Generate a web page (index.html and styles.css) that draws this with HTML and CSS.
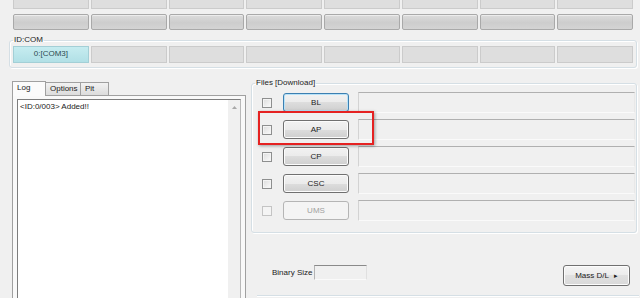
FILE: index.html
```html
<!DOCTYPE html>
<html lang="en">
<head>
    <meta charset="UTF-8">
    <title>Odin</title>
<link rel="stylesheet" href="styles.css">
</head>
<body>
    <div class="strip strip-top">
        <div class="cell"></div><div class="cell"></div><div class="cell"></div><div class="cell"></div>
        <div class="cell"></div><div class="cell"></div><div class="cell"></div><div class="cell"></div>
    </div>
    <div class="strip strip-bars">
        <div class="bar"></div><div class="bar"></div><div class="bar"></div><div class="bar"></div>
        <div class="bar"></div><div class="bar"></div><div class="bar"></div><div class="bar"></div>
    </div>
    <fieldset class="group com-group">
        <legend>ID:COM</legend>
        <div class="strip strip-com">
            <div class="cell port">0:[COM3]</div><div class="cell"></div><div class="cell"></div><div class="cell"></div>
            <div class="cell"></div><div class="cell"></div><div class="cell"></div><div class="cell"></div>
        </div>
    </fieldset>

    <div class="lower">
        <div class="log-side">
            <div class="tabs">
                <span class="tab selected">Log</span>
                <span class="tab">Options</span>
                <span class="tab">Pit</span>
            </div>
            <div class="tab-page">
                <div class="log-box">
                    <div class="log-text">&lt;ID:0/003&gt; Added!!</div>
                    <div class="scroll">
                        <svg width="5" height="3" viewBox="0 0 5 3"><path d="M0 3 L2.5 0 L5 3 Z" fill="#a8a8a8"/></svg>
                    </div>
                </div>
            </div>
        </div>

        <div class="files-side">
            <fieldset class="group files-group">
                <legend>Files [Download]</legend>
                <div class="file-row">
                    <span class="check"></span>
                    <button class="btn file-btn focused">BL</button>
                    <div class="path"></div>
                </div>
                <div class="file-row">
                    <span class="check"></span>
                    <button class="btn file-btn">AP</button>
                    <div class="path"></div>
                </div>
                <div class="file-row">
                    <span class="check"></span>
                    <button class="btn file-btn">CP</button>
                    <div class="path"></div>
                </div>
                <div class="file-row">
                    <span class="check"></span>
                    <button class="btn file-btn">CSC</button>
                    <div class="path"></div>
                </div>
                <div class="file-row">
                    <span class="check disabled"></span>
                    <button class="btn file-btn disabled">UMS</button>
                    <div class="path"></div>
                </div>
            </fieldset>
            <div class="actions">
                <span class="size-label">Binary Size</span>
                <div class="size-box"></div>
                <button class="btn mass">Mass D/L <span class="arrow">&#9656;</span></button>
            </div>
            <div class="bottom-line"></div>
        </div>
    </div>

    <div class="highlight"></div>
</body>
</html>
```

FILE: styles.css
```css
body {
    margin: 0;
    padding: 0;
    width: 640px;
    height: 298px;
    overflow: hidden;
    position: relative;
    background: #f0f0f0;
    font-family: 'Liberation Sans', Arial, sans-serif;
    font-size: 8px;
    color: #222;
}

.strip {
    display: grid;
    grid-template-columns: repeat(8, 1fr);
    column-gap: 2px;
    width: 620px;
}

.strip-top {
    margin-left: 13px;
    height: 9px;
}

.strip-top .cell {
    border-top: none;
}

.strip-bars {
    margin-left: 13px;
    margin-top: 5px;
    height: 16px;
}

.cell {
    background: #dedede;
    border: 1px solid #cbcbcb;
    box-sizing: border-box;
    text-align: center;
    line-height: 14px;
}

.bar {
    box-sizing: border-box;
    border: 1px solid #a9a9a9;
    border-radius: 2px;
    background: linear-gradient(#dcdcdc, #cdcdcd 55%, #d4d4d4);
    box-shadow: inset 0 1px 0 #ececec;
}

.group {
    border: 1px solid #d5dfe5;
    border-radius: 3px;
    box-shadow: inset 1px 1px 0 #fff, 1px 1px 0 #fff;
}

.group legend {
    padding: 0 1px;
    line-height: 10px;
    color: #222;
}

.com-group {
    margin: 5px 4px 0 9px;
    padding: 1px 3px 4px 3px;
}

.strip-com {
    height: 17px;
}

.cell.port {
    background: linear-gradient(#c6ecf0, #b1e0e6);
    border-color: #a3cfd6;
    color: #2c4a50;
}

.lower {
    display: flex;
    align-items: flex-start;
    margin-top: 10px;
}

.log-side {
    width: 234px;
    margin-left: 12px;
    margin-top: 3px;
}

.tabs {
    display: flex;
    align-items: flex-end;
    height: 14px;
    padding-left: 1px;
}

.tab {
    box-sizing: border-box;
    height: 13px;
    line-height: 12px;
    padding: 0 4px;
    border: 1px solid #a0a0a0;
    border-bottom: none;
    background: linear-gradient(#f2f2f2, #dcdcdc);
    margin-left: -1px;
}

.tab.selected {
    height: 15px;
    width: 34px;
    margin-bottom: -1px;
    background: #fbfbfb;
    line-height: 11px;
    position: relative;
    z-index: 1;
}

.tab:nth-child(2) {
    width: 36px;
}

.tab:nth-child(3) {
    width: 29px;
}

.tab-page {
    border: 1px solid #a0a0a0;
    border-bottom: none;
    background: #f9f9f9;
    padding: 3px 4px 0 4px;
    height: 210px;
}

.log-box {
    display: flex;
    height: 210px;
    background: #fff;
    border: 1px solid #7d7d7d;
    border-right-color: #b8b8b8;
    border-bottom: none;
}

.log-text {
    flex: 1;
    padding: 2px 2px;
    line-height: 10px;
    color: #222;
}

.scroll {
    width: 12px;
    background: #f0f0f0;
    display: flex;
    justify-content: center;
    padding-top: 6px;
    box-sizing: border-box;
}

.scroll svg {
    display: block;
}

.files-side {
    margin-left: 5px;
    width: 388px;
}

.files-group {
    margin: 0 2px 0 0;
    padding: 4px 1px 11px 10px;
    display: flex;
    flex-direction: column;
    row-gap: 6px;
}

.files-group legend {
    margin-left: -7px;
}

.file-row {
    display: flex;
    align-items: center;
    height: 21px;
}

.check {
    box-sizing: border-box;
    width: 10px;
    height: 10px;
    border: 1px solid #8e8f8f;
    background: linear-gradient(135deg, #dcdcdc, #fbfbfb);
    box-shadow: inset 0 0 0 1px #f4f4f4;
}

.check.disabled {
    border-color: #c4c4c4;
    background: #f4f4f4;
}

.btn {
    font-family: 'Liberation Sans', Arial, sans-serif;
    font-size: 8px;
    color: #222;
    box-sizing: border-box;
    border: 1px solid #707070;
    border-radius: 3px;
    background: linear-gradient(#f2f2f2, #ebebeb 50%, #dddddd 50%, #cfcfcf);
    box-shadow: inset 0 0 0 1px #fcfcfc;
    padding: 0;
    margin: 0;
}

.file-btn {
    width: 66px;
    height: 19px;
    margin-left: 11px;
}

.file-btn.focused {
    border-color: #3c7fb1;
    box-shadow: inset 0 0 0 1px #b8e2f8;
}

.file-btn.disabled {
    border-color: #b5b5b5;
    background: #f4f4f4;
    color: #a0a0a0;
    box-shadow: none;
}

.path {
    flex: 1;
    height: 21px;
    margin-left: 9px;
    box-sizing: border-box;
    border: 1px solid #d3d3d3;
    border-top-color: #b0b0b0;
    border-bottom-color: #fafafa;
    border-right-color: #e8e8e8;
    background: #f0f0f0;
}

.actions {
    display: flex;
    align-items: flex-start;
    margin-top: 32px;
    padding-left: 21px;
    margin-right: 9px;
}

.size-label {
    line-height: 15px;
    color: #222;
}

.size-box {
    width: 53px;
    height: 15px;
    margin-left: 2px;
    box-sizing: border-box;
    border: 1px solid #b4b4b4;
    border-top-color: #8a8a8a;
    border-right-color: #e0e0e0;
    border-bottom-color: #fafafa;
    background: #f0f0f0;
}

.mass {
    margin-left: auto;
    width: 67px;
    height: 21px;
    background: linear-gradient(#f4f4f4, #ececec 50%, #e0e0e0 50%, #d9d9d9);
}

.mass .arrow {
    margin-left: 3px;
    font-size: 7px;
}

.bottom-line {
    margin-top: 9px;
    margin-left: 6px;
    border-top: 1px solid #d5dfe5;
    border-bottom: 1px solid #fff;
}

.highlight {
    position: absolute;
    left: 258px;
    top: 111px;
    width: 112px;
    height: 30px;
    border: 2px solid #e52222;
    box-shadow: 1px 1px 3px rgba(0, 0, 0, 0.35);
}
```
